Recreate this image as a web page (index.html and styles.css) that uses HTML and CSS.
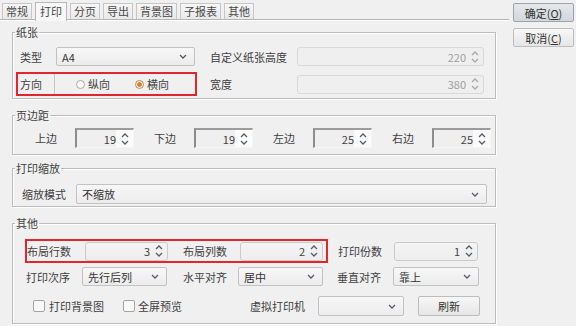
FILE: index.html
```html
<!DOCTYPE html>
<html lang="zh-CN">
<head>
  <meta charset="UTF-8">
  <title>打印设置</title>
  <link rel="stylesheet" href="styles.css">
</head>
<body>
  <div class="dialog">
    <div class="main">
      <div class="tabs">
        <div class="tab">常规</div>
        <div class="tab active">打印</div>
        <div class="tab">分页</div>
        <div class="tab">导出</div>
        <div class="tab">背景图</div>
        <div class="tab">子报表</div>
        <div class="tab">其他</div>
      </div>

      <div class="panel">
        <!-- 纸张 -->
        <fieldset class="group paper">
          <legend>纸张</legend>
          <div class="row row-type">
            <span class="lbl w-type">类型</span>
            <div class="select w-a4"><span>A4</span><svg class="chev" width="8" height="5" viewBox="0 0 8 5"><path d="M1 1 L4 4 L7 1"/></svg></div>
            <span class="lbl w-custom">自定义纸张高度</span>
            <div class="num flat disabled w-size"><span>220</span><svg class="spin" width="8" height="14" viewBox="0 0 8 14"><path d="M1 5 L4 2 L7 5 M1 9 L4 12 L7 9"/></svg></div>
          </div>
          <div class="row row-orient">
            <div class="mark orient">
              <span class="lbl w-dir">方向</span>
              <div class="radios">
                <span class="radio"><i class="dot"></i>纵向</span>
                <span class="radio"><i class="dot on"></i>横向</span>
              </div>
            </div>
            <span class="lbl w-custom">宽度</span>
            <div class="num flat disabled w-size"><span>380</span><svg class="spin" width="8" height="14" viewBox="0 0 8 14"><path d="M1 5 L4 2 L7 5 M1 9 L4 12 L7 9"/></svg></div>
          </div>
        </fieldset>

        <!-- 页边距 -->
        <fieldset class="group margins">
          <legend>页边距</legend>
          <div class="row row-margin">
            <span class="lbl w-m">上边</span>
            <div class="num sunken"><span>19</span><svg class="spin" width="8" height="14" viewBox="0 0 8 14"><path d="M1 5 L4 2 L7 5 M1 9 L4 12 L7 9"/></svg></div>
            <span class="lbl w-m gap-m">下边</span>
            <div class="num sunken"><span>19</span><svg class="spin" width="8" height="14" viewBox="0 0 8 14"><path d="M1 5 L4 2 L7 5 M1 9 L4 12 L7 9"/></svg></div>
            <span class="lbl w-m gap-m">左边</span>
            <div class="num sunken"><span>25</span><svg class="spin" width="8" height="14" viewBox="0 0 8 14"><path d="M1 5 L4 2 L7 5 M1 9 L4 12 L7 9"/></svg></div>
            <span class="lbl w-m gap-m">右边</span>
            <div class="num sunken"><span>25</span><svg class="spin" width="8" height="14" viewBox="0 0 8 14"><path d="M1 5 L4 2 L7 5 M1 9 L4 12 L7 9"/></svg></div>
          </div>
        </fieldset>

        <!-- 打印缩放 -->
        <fieldset class="group zoom">
          <legend>打印缩放</legend>
          <div class="row row-zoom">
            <span class="lbl w-zoom">缩放模式</span>
            <div class="select w-zoomsel"><span>不缩放</span><svg class="chev" width="8" height="5" viewBox="0 0 8 5"><path d="M1 1 L4 4 L7 1"/></svg></div>
          </div>
        </fieldset>

        <!-- 其他 -->
        <fieldset class="group other">
          <legend>其他</legend>
          <div class="row row-layout">
            <div class="mark layout">
              <span class="lbl w-lay">布局行数</span>
              <div class="num flat w-lnum"><span>3</span><svg class="spin" width="8" height="14" viewBox="0 0 8 14"><path d="M1 5 L4 2 L7 5 M1 9 L4 12 L7 9"/></svg></div>
              <span class="lbl w-lay2">布局列数</span>
              <div class="num flat w-lnum"><span>2</span><svg class="spin" width="8" height="14" viewBox="0 0 8 14"><path d="M1 5 L4 2 L7 5 M1 9 L4 12 L7 9"/></svg></div>
            </div>
            <span class="lbl w-copies">打印份数</span>
            <div class="num flat w-cnum"><span>1</span><svg class="spin" width="8" height="14" viewBox="0 0 8 14"><path d="M1 5 L4 2 L7 5 M1 9 L4 12 L7 9"/></svg></div>
          </div>
          <div class="row row-align">
            <span class="lbl w-order">打印次序</span>
            <div class="select w-osel"><span>先行后列</span><svg class="chev" width="8" height="5" viewBox="0 0 8 5"><path d="M1 1 L4 4 L7 1"/></svg></div>
            <span class="lbl w-h">水平对齐</span>
            <div class="select w-osel"><span>居中</span><svg class="chev" width="8" height="5" viewBox="0 0 8 5"><path d="M1 1 L4 4 L7 1"/></svg></div>
            <span class="lbl w-v">垂直对齐</span>
            <div class="select w-vsel"><span>靠上</span><svg class="chev" width="8" height="5" viewBox="0 0 8 5"><path d="M1 1 L4 4 L7 1"/></svg></div>
          </div>
          <div class="row row-misc">
            <span class="check"><i class="box"></i>打印背景图</span>
            <span class="check check2"><i class="box"></i>全屏预览</span>
            <span class="lbl w-printer">虚拟打印机</span>
            <div class="select w-psel"><span></span><svg class="chev" width="8" height="5" viewBox="0 0 8 5"><path d="M1 1 L4 4 L7 1"/></svg></div>
            <button class="btn refresh">刷新</button>
          </div>
        </fieldset>
      </div>
    </div>

    <div class="side">
      <button class="btn ok">确定(<u>O</u>)</button>
      <button class="btn">取消(<u>C</u>)</button>
    </div>
  </div>
</body>
</html>
```

FILE: styles.css
```css
body {
  margin: 0;
  background: #f0f0f0;
  color: #404040;
  font-family: "Noto Sans CJK SC", "Noto Sans", sans-serif;
  font-size: 11px;
  line-height: 14px;
}

.dialog {
  display: flex;
  width: 576px;
  height: 326px;
}

.main {
  width: 509px;
  display: flex;
  flex-direction: column;
}

/* tabs */
.tabs {
  display: flex;
  align-items: flex-end;
  height: 19px;
  padding-left: 2px;
  border-bottom: 1px solid #b4b4b4;
  box-shadow: 0 1px 0 #ffffff;
}

.tab {
  height: 15px;
  line-height: 15px;
  padding: 0 3px;
  margin-right: 3px;
  border: 1px solid #c6c6c6;
  border-bottom: none;
  background: linear-gradient(#f6f6f6, #e9e9e9);
  color: #484848;
}

.tab.active {
  height: 18px;
  line-height: 17px;
  padding: 0 4px;
  margin-bottom: -2px;
  background: #f7f7f7;
  border-color: #b8b8b8;
  position: relative;
}

.panel {
  padding-top: 5px;
}

/* group boxes */
.group {
  margin: 0 0 0 12px;
  padding: 0;
  width: 482px;
  min-width: 0;
  border: 1px solid #bcbcbc;
  box-shadow: inset 1px 1px 0 #ffffff, 1px 1px 0 #ffffff;
}

.group legend {
  margin-left: 2px;
  padding: 0 1px;
  line-height: 14px;
}

.paper { padding-bottom: 2px; }
.margins { margin-top: 9px; padding-bottom: 6px; }
.zoom { margin-top: 6px; padding-bottom: 2px; }
.other { margin-top: 9px; padding-bottom: 7px; }

.row {
  display: flex;
  align-items: center;
}

.lbl {
  flex: none;
  white-space: nowrap;
}

.row-type { margin-top: 8px; height: 19px; padding-left: 7px; }
.w-type { width: 36px; }
.w-a4 { width: 139px; }
.w-custom { width: 87px; margin-left: 15px; }
.w-size { width: 187px; }

.row-orient { margin-top: 6px; padding-left: 3px; }

/* red highlight boxes */
.mark {
  display: flex;
  align-items: center;
  box-sizing: border-box;
  flex: none;
  height: 24px;
  border: 2px solid #e2262d;
}

.orient {
  width: 181px;
  padding-left: 2px;
}

.orient + .w-custom { margin-left: 13px; }

.w-dir { width: 34px; }

.radios {
  display: flex;
  align-items: center;
  align-self: stretch;
  flex: 1;
  border-left: 1px solid #c4c4c4;
  padding-left: 21px;
}

.radio {
  display: flex;
  align-items: center;
  flex: none;
  white-space: nowrap;
  gap: 3px;
  margin-right: 25px;
}

.dot {
  box-sizing: border-box;
  width: 9px;
  height: 9px;
  border-radius: 50%;
  border: 1px solid #a9a9a9;
  background: #fafafa;
}

.dot.on {
  border-color: #c98a4a;
  background: radial-gradient(circle, #d3812f 0 2px, #fbf3ea 2.5px);
}

/* inputs */
.select, .num {
  display: flex;
  align-items: center;
  box-sizing: border-box;
  flex: none;
}

.select {
  height: 19px;
  padding: 0 7px 0 5px;
  border: 1px solid #c2c2c2;
  border-radius: 2px;
  background: linear-gradient(#f7f7f7, #ececec);
  color: #333;
}

.select span { flex: 1; }

.chev path, .spin path {
  fill: none;
  stroke: #555c66;
  stroke-width: 1.3;
}

.num {
  height: 19px;
  justify-content: flex-end;
  padding-right: 4px;
}

.num span { margin-right: 5px; }

.flat {
  border: 1px solid #cbcbcb;
  border-radius: 3px;
  background: linear-gradient(#f4f4f4, #ededed);
}

.num.disabled {
  color: #9e9e9e;
  background: #efefef;
  border-color: #d9d9d9;
}

.num.disabled .spin path { stroke: #a8a8a8; }

.sunken {
  width: 59px;
  height: 20px;
  border-style: solid;
  border-width: 2px 1px 1px 2px;
  border-color: #9c9c9c #f6f6f6 #f6f6f6 #8c8c8c;
  background: linear-gradient(90deg, #efefef 70%, #fbfbfb 70%);
}

.row-margin { margin-top: 6px; padding-left: 22px; }
.w-m { width: 40px; }
.gap-m { margin-left: 20px; }

.row-zoom { margin-top: 9px; padding-left: 9px; }
.w-zoom { width: 54px; }
.w-zoomsel { width: 411px; height: 20px; }

.row-layout { margin-top: 9px; padding-left: 12px; }
.layout { width: 303px; }
.w-lay { width: 58px; }
.w-lay2 { width: 57px; margin-left: 15px; }
.w-lnum { width: 83px; }
.w-copies { width: 56px; margin-left: 10px; }
.w-cnum { width: 84px; }

.row-align { margin-top: 4px; padding-left: 13px; }
.w-order { width: 56px; }
.w-osel { width: 85px; }
.w-h { width: 55px; margin-left: 16px; }
.w-v { width: 56px; margin-left: 14px; }
.w-vsel { width: 86px; }

.row-misc { margin-top: 10px; padding-left: 20px; height: 20px; }

.check {
  display: flex;
  align-items: center;
  gap: 4px;
  width: 71px;
  flex: none;
  white-space: nowrap;
}

.check2 { width: 127px; gap: 3px; margin-left: 19px; }

.box {
  box-sizing: border-box;
  width: 12px;
  height: 12px;
  border: 1px solid #a3a3a3;
  border-radius: 2px;
  background: #f9f9f9;
}

.w-printer { width: 68px; }
.w-psel { width: 86px; height: 20px; }

/* buttons */
.btn {
  box-sizing: border-box;
  font-family: inherit;
  font-size: 11px;
  line-height: 14px;
  color: #333;
  border: 1px solid #bdbdbd;
  border-radius: 2px;
  background: linear-gradient(#f7f7f7, #e6e6e6);
  padding: 0;
}

.btn u { text-decoration: underline; }

.refresh {
  width: 62px;
  height: 20px;
  margin-left: 14px;
}

.side {
  display: flex;
  flex-direction: column;
  gap: 6px;
  padding: 3px 0 0 4px;
}

.side .btn {
  width: 61px;
  height: 19px;
}

.side .ok {
  border-color: #9da3aa;
  background: linear-gradient(#e4e7ea, #d3d7dc);
}
```
